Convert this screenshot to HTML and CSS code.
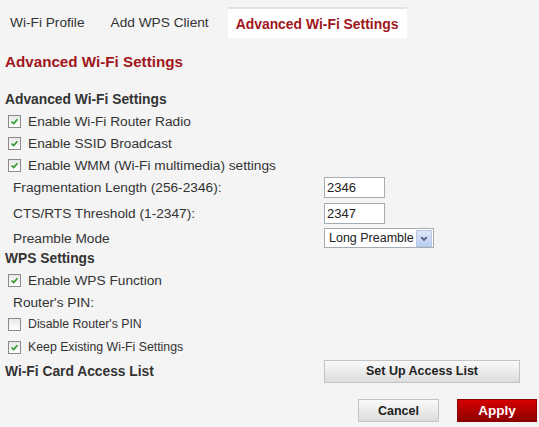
FILE: index.html
```html
<!DOCTYPE html>
<html>
<head>
<meta charset="utf-8">
<link rel="stylesheet" href="styles.css">
</head>
<body>
<div class="tabs">
  <div class="tab">Wi-Fi Profile</div>
  <div class="tab">Add WPS Client</div>
  <div class="tab active">Advanced Wi-Fi Settings</div>
</div>
<div class="content">
  <h1 class="title">Advanced Wi-Fi Settings</h1>

  <div class="row heading">Advanced Wi-Fi Settings</div>
  <div class="row cb"><span class="box checked"><svg viewBox="0 0 13 13"><path d="M3 6.5 L5.5 9 L10 3.8" /></svg></span>Enable Wi-Fi Router Radio</div>
  <div class="row cb"><span class="box checked"><svg viewBox="0 0 13 13"><path d="M3 6.5 L5.5 9 L10 3.8" /></svg></span>Enable SSID Broadcast</div>
  <div class="row cb"><span class="box checked"><svg viewBox="0 0 13 13"><path d="M3 6.5 L5.5 9 L10 3.8" /></svg></span>Enable WMM (Wi-Fi multimedia) settings</div>

  <div class="row field r-frag"><span class="label">Fragmentation Length (256-2346):</span><span class="input">2346</span></div>
  <div class="row field r-cts"><span class="label">CTS/RTS Threshold (1-2347):</span><span class="input">2347</span></div>
  <div class="row field r-pre"><span class="label">Preamble Mode</span><span class="select"><span class="sel-text">Long Preamble</span><span class="sel-btn"><svg viewBox="0 0 14 16"><path d="M4 6.5 L7 9.5 L10 6.5" /></svg></span></span></div>

  <div class="row heading">WPS Settings</div>
  <div class="row cb"><span class="box checked"><svg viewBox="0 0 13 13"><path d="M3 6.5 L5.5 9 L10 3.8" /></svg></span>Enable WPS Function</div>
  <div class="row field"><span class="label">Router's PIN:</span></div>
  <div class="row cb small"><span class="box"></span>Disable Router's PIN</div>
  <div class="row cb small r-keep"><span class="box checked"><svg viewBox="0 0 13 13"><path d="M3 6.5 L5.5 9 L10 3.8" /></svg></span>Keep Existing Wi-Fi Settings</div>

  <div class="row heading r-access"><span class="label-h">Wi-Fi Card Access List</span><button class="btn btn-wide">Set Up Access List</button></div>

  <div class="actions">
    <button class="btn btn-cancel">Cancel</button>
    <button class="btn btn-apply">Apply</button>
  </div>
</div>
</body>
</html>
```
FILE: styles.css
```css
html, body {
  margin: 0;
  padding: 0;
  background: #f4f4f4;
  font-family: "Liberation Sans", Arial, sans-serif;
  font-size: 13.7px;
  color: #333;
}

.tabs {
  display: flex;
  padding: 7px 0 0 2px;
  gap: 10px;
  height: 31px;
}

.tab {
  display: flex;
  align-items: center;
  padding: 0 8px;
  height: 31px;
  box-sizing: border-box;
  color: #333;
  white-space: nowrap;
}

.tab.active {
  background: #fff;
  border-top: 2px solid #e2e2e2;
  color: #a0161b;
  font-weight: bold;
  font-size: 13.9px;
  padding: 0 9px 0 8px;
  margin-left: 1px;
}

.content {
  padding-left: 5px;
}

.title {
  margin: 14px 0 17px 0;
  height: 20px;
  line-height: 20px;
  font-size: 15.2px;
  font-weight: bold;
  color: #a0161b;
}

.row {
  display: flex;
  align-items: center;
  height: 22px;
  white-space: nowrap;
}

.heading {
  font-weight: bold;
  font-size: 13.8px;
  color: #333;
  height: 21px;
}

.cb {
  padding-left: 3px;
}

.cb.small {
  font-size: 12.3px;
}

.box {
  width: 13px;
  height: 13px;
  box-sizing: border-box;
  border: 1px solid #8a8a8a;
  background: linear-gradient(#e8e8e8, #fff);
  margin-right: 7px;
  display: inline-flex;
  flex: none;
}

.box svg {
  width: 11px;
  height: 11px;
}

.box svg path {
  fill: none;
  stroke: #2f9a30;
  stroke-width: 2;
}

.field .label {
  width: 319px;
  padding-left: 8px;
  box-sizing: border-box;
}

.r-cts { height: 30px; }
.r-pre { height: 20px; }
.r-keep { height: 24px; }

.input {
  width: 61px;
  height: 21px;
  box-sizing: border-box;
  border: 1px solid #a5acb2;
  background: #fff;
  padding-left: 2px;
  line-height: 19px;
  font-size: 13px;
  color: #222;
}

.select {
  display: flex;
  align-items: center;
  width: 110px;
  height: 20px;
  box-sizing: border-box;
  border: 1px solid #a5acb2;
  background: #fff;
  color: #222;
  font-size: 12.5px;
}

.sel-text {
  flex: 1;
  padding-left: 4px;
  white-space: nowrap;
}

.sel-btn {
  width: 16px;
  height: 17px;
  margin-right: 1px;
  background: linear-gradient(#dbe6f8, #b9cdf0);
  border: 1px solid #b7c8e8;
  box-sizing: border-box;
  display: flex;
  flex: none;
}

.sel-btn svg {
  width: 14px;
  height: 15px;
}

.sel-btn svg path {
  fill: none;
  stroke: #4d6185;
  stroke-width: 2;
}

.r-access {
  height: 24px;
}

.label-h {
  width: 319px;
}

.btn {
  font-family: "Liberation Sans", Arial, sans-serif;
  font-weight: bold;
  font-size: 12.5px;
  height: 23px;
  box-sizing: border-box;
  padding: 0;
  cursor: pointer;
}

.btn-wide {
  width: 196px;
  border: 1px solid #c4c4c4;
  background: linear-gradient(#fafafa, #dcdcdc);
  color: #222;
}

.actions {
  display: flex;
  justify-content: flex-end;
  gap: 18px;
  margin-top: 16px;
  padding-right: 2px;
}

.btn-cancel {
  width: 81px;
  border: 1px solid #c4c4c4;
  background: linear-gradient(#fafafa, #dcdcdc);
  color: #222;
}

.btn-apply {
  width: 80px;
  border: 1px solid #8a0000;
  background: linear-gradient(#d40000, #8e0000);
  color: #fff;
  font-size: 13.5px;
}
```
